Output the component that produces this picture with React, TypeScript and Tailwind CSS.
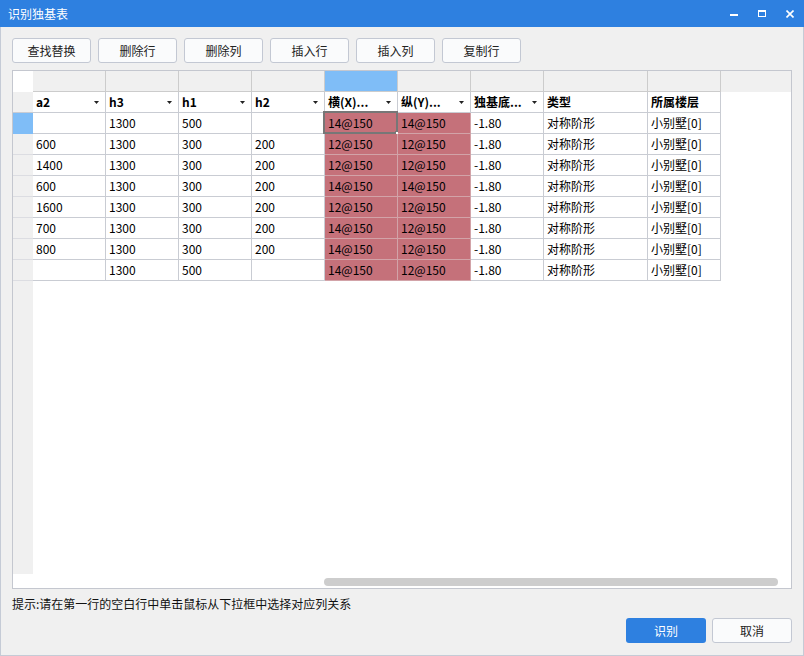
import React from "react";

const FONT = { fontFamily: '"Noto Sans CJK SC", "Noto Sans", sans-serif' };

type Col = { name: string; wide?: boolean; arrow: boolean };
const cols: Col[] = [
  { name: "a2", arrow: true },
  { name: "h3", arrow: true },
  { name: "h1", arrow: true },
  { name: "h2", arrow: true },
  { name: "横(X)...", arrow: true },
  { name: "纵(Y)...", arrow: true },
  { name: "独基底...", arrow: true },
  { name: "类型", wide: true, arrow: false },
  { name: "所属楼层", arrow: false },
];

const rows: string[][] = [
  ["", "1300", "500", "", "14@150", "14@150", "-1.80", "对称阶形", "小别墅[0]"],
  ["600", "1300", "300", "200", "12@150", "12@150", "-1.80", "对称阶形", "小别墅[0]"],
  ["1400", "1300", "300", "200", "12@150", "12@150", "-1.80", "对称阶形", "小别墅[0]"],
  ["600", "1300", "300", "200", "14@150", "14@150", "-1.80", "对称阶形", "小别墅[0]"],
  ["1600", "1300", "300", "200", "12@150", "12@150", "-1.80", "对称阶形", "小别墅[0]"],
  ["700", "1300", "300", "200", "14@150", "12@150", "-1.80", "对称阶形", "小别墅[0]"],
  ["800", "1300", "300", "200", "14@150", "12@150", "-1.80", "对称阶形", "小别墅[0]"],
  ["", "1300", "500", "", "14@150", "12@150", "-1.80", "对称阶形", "小别墅[0]"],
];

function Arrow() {
  return (
    <svg width="5" height="3" viewBox="0 0 5 3" className="shrink-0">
      <path d="M0 0 H5 L2.5 3 Z" fill="#222" />
    </svg>
  );
}

function ToolButton({ label }: { label: string }) {
  return (
    <div className="w-[79px] h-[25px] flex items-center justify-center border border-[#c3c8d3] bg-[#fafbfc] rounded-[3px] text-[12px] text-[#222] leading-none">
      {label}
    </div>
  );
}

export default function App() {
  return (
    <div className="w-[804px] h-[656px] flex flex-col bg-[#f0f0f0] text-black" style={FONT}>
      {/* title bar */}
      <div className="h-[27px] shrink-0 bg-[#2e80e0] flex items-center justify-between">
        <div className="pl-[8px] text-[12px] text-white leading-none">识别独基表</div>
        <div className="flex h-full">
          <div className="w-[28px] h-full flex items-center justify-center">
            <div className="w-[8px] h-[2px] bg-white mt-[3px]" />
          </div>
          <div className="w-[28px] h-full flex items-center justify-center">
            <div className="w-[8px] h-[7px] border border-white border-t-2" />
          </div>
          <div className="w-[28px] h-full flex items-center justify-center">
            <svg width="8" height="8" viewBox="0 0 8 8">
              <path d="M0.5 0.5 L7.5 7.5 M7.5 0.5 L0.5 7.5" stroke="white" strokeWidth="1.6" />
            </svg>
          </div>
        </div>
      </div>

      {/* body */}
      <div className="flex-1 flex flex-col border-x border-b border-[#c5cbd6] px-[11px] pt-[11px] pb-[12px]">
        <div className="flex gap-[7px] h-[25px]">
          {["查找替换", "删除行", "删除列", "插入行", "插入列", "复制行"].map((l) => (
            <ToolButton key={l} label={l} />
          ))}
        </div>

        {/* table */}
        <div className="mt-[7px] h-[519px] border border-[#c4c7cf] bg-white flex flex-col text-[12px] leading-none">
          <div className="flex-1 flex flex-col">
            {/* top letter row */}
            <div className="flex h-[21px] bg-[#f0f0f0]">
              <div className="w-[20px] h-full bg-white" />
              {cols.map((c, i) => (
                <div
                  key={i}
                  className={`${c.wide ? "w-[104px]" : "w-[73px]"} h-full border-r border-b border-[#cccccc] ${i === 4 ? "bg-[#7fbdf7]" : ""}`}
                />
              ))}
              <div className="flex-1" />
            </div>
            {/* header row */}
            <div className="flex h-[21px]">
              <div className="w-[20px] h-full bg-[#f0f0f0] border-b border-[#c9ccd3]" />
              {cols.map((c, i) => (
                <div
                  key={i}
                  className={`${c.wide ? "w-[104px]" : "w-[73px]"} h-full border-r border-b border-[#c9ccd3] flex items-center justify-between pl-[3px] pr-[6px] font-bold`}
                >
                  <span className="whitespace-nowrap">{c.name}</span>
                  {c.arrow && <Arrow />}
                </div>
              ))}
              <div className="flex-1" />
            </div>
            {/* data rows */}
            {rows.map((r, ri) => (
              <div key={ri} className="flex h-[21px]">
                <div
                  className={`w-[20px] h-full border-b ${ri === 0 ? "bg-[#7fbdf7] border-[#7fbdf7]" : "bg-[#f0f0f0] border-[#dcdde2]"}`}
                />
                {cols.map((c, ci) => (
                  <div
                    key={ci}
                    className={`${c.wide ? "w-[104px]" : "w-[73px]"} h-full border-r border-b flex items-center pl-[3px] whitespace-nowrap relative ${
                      ci === 4 || ci === 5 ? "bg-[#c5717a] border-[#d2a3a8]" : "border-[#c9ccd3]"
                    }`}
                  >
                    {r[ci]}
                    {ri === 0 && ci === 4 && (
                      <div className="absolute -top-[2px] -left-[2px] w-[75px] h-[23px] border-2 border-[#777777]">
                        <div className="absolute -right-[4px] -bottom-[4px] w-[5px] h-[5px] bg-white border border-[#777777]" />
                      </div>
                    )}
                  </div>
                ))}
                <div className="flex-1" />
              </div>
            ))}
            {/* filler */}
            <div className="flex-1 flex">
              <div className="w-[20px] bg-[#f0f0f0]" />
            </div>
          </div>
          {/* horizontal scrollbar strip */}
          <div className="h-[14px] shrink-0 pt-[4px]">
            <div className="ml-[311px] w-[454px] h-[8px] rounded-full bg-[#cdcdcd]" />
          </div>
        </div>

        {/* hint */}
        <div className="h-[29px] flex items-center text-[12px] leading-none text-[#111]">
          提示:请在第一行的空白行中单击鼠标从下拉框中选择对应列关系
        </div>

        {/* bottom buttons */}
        <div className="h-[25px] flex justify-end gap-[6px]">
          <div className="w-[80px] h-full rounded-[3px] bg-[#2e80e0] text-white text-[12px] leading-none flex items-center justify-center">
            识别
          </div>
          <div className="w-[80px] h-full rounded-[3px] border border-[#c3c8d3] bg-[#fafbfc] text-[#222] text-[12px] leading-none flex items-center justify-center">
            取消
          </div>
        </div>
      </div>
    </div>
  );
}
